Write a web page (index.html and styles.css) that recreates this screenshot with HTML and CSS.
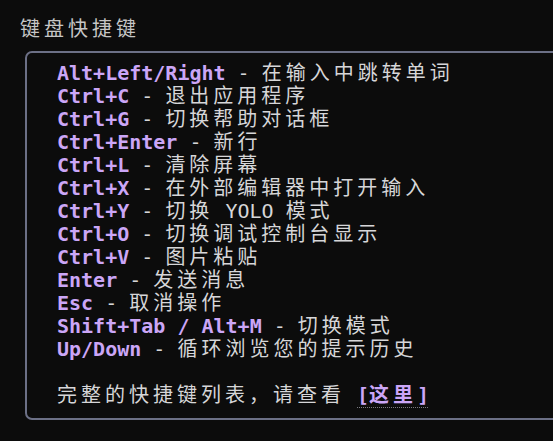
FILE: index.html
```html
<!DOCTYPE html>
<html lang="zh-CN">
<head>
<meta charset="utf-8">
<link rel="stylesheet" href="styles.css">
</head>
<body>
<div class="title"><span class="cjk">键盘快捷键</span></div>
<div class="box">
  <div class="line"><span class="key">Alt+Left/Right</span> - <span class="cjk">在输入中跳转单词</span></div>
  <div class="line"><span class="key">Ctrl+C</span> - <span class="cjk">退出应用程序</span></div>
  <div class="line"><span class="key">Ctrl+G</span> - <span class="cjk">切换帮助对话框</span></div>
  <div class="line"><span class="key">Ctrl+Enter</span> - <span class="cjk">新行</span></div>
  <div class="line"><span class="key">Ctrl+L</span> - <span class="cjk">清除屏幕</span></div>
  <div class="line"><span class="key">Ctrl+X</span> - <span class="cjk">在外部编辑器中打开输入</span></div>
  <div class="line"><span class="key">Ctrl+Y</span> - <span class="cjk">切换</span> YOLO <span class="cjk">模式</span></div>
  <div class="line"><span class="key">Ctrl+O</span> - <span class="cjk">切换调试控制台显示</span></div>
  <div class="line"><span class="key">Ctrl+V</span> - <span class="cjk">图片粘贴</span></div>
  <div class="line"><span class="key">Enter</span> - <span class="cjk">发送消息</span></div>
  <div class="line"><span class="key">Esc</span> - <span class="cjk">取消操作</span></div>
  <div class="line"><span class="key">Shift+Tab / Alt+M</span> - <span class="cjk">切换模式</span></div>
  <div class="line"><span class="key">Up/Down</span> - <span class="cjk">循环浏览您的提示历史</span></div>
  <div class="line"></div>
  <div class="line"><span class="cjk">完整的快捷键列表，请查看</span> <a class="link"><span class="key">[</span><span class="key cjk">这里</span><span class="key">]</span></a></div>
</div>
</body>
</html>
```
FILE: styles.css
```css
html, body {
  margin: 0;
  padding: 0;
  background: #0c0c0c;
  height: 100%;
  overflow: hidden;
}
body {
  font-family: "DejaVu Sans Mono", "Noto Sans CJK SC", monospace;
  font-size: 20px;
  line-height: 23px;
  color: #d6d6d8;
}
.title {
  padding: 16px 0 0 20px;
  height: 35px;
  color: #c6c6c6;
  white-space: pre;
}
.cjk {
  font-family: "Noto Sans CJK SC", sans-serif;
  letter-spacing: 4px;
}
.box {
  margin-left: 25px;
  width: 620px;
  border: 2px solid #6c7086;
  border-radius: 7px;
  padding: 7px 0 13px 30px;
  box-sizing: border-box;
}
.line {
  height: 23px;
  white-space: pre;
}
.key {
  color: #cba6f7;
  font-weight: bold;
}
.link {
  text-decoration: underline dotted #7a7a80;
  text-decoration-thickness: 1px;
  text-underline-offset: 5px;
}
```
